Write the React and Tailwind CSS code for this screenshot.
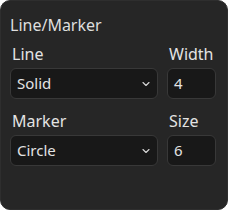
import { ChevronDown } from "lucide-react";

function Field({ label, value, select, className }) {
  return (
    <div className={className + " flex flex-col"}>
      <span className="text-[16px] leading-[20px] text-[#e3e3e3] pl-[2px]">{label}</span>
      <div className="mt-[4px] h-[31px] flex items-center justify-between rounded-[6px] border border-[#383838] bg-[#181818] pl-[6px] pr-[5px]">
        <span className="text-[15px] text-[#e3e3e3]">{value}</span>
        {select && <ChevronDown size={12} strokeWidth={2.2} className="text-[#d8d8d8]" />}
      </div>
    </div>
  );
}

export default function App() {
  return (
    <div
      className="w-[228px] h-[210px] bg-[#262626] rounded-[10px] border border-[#2e2e2e] px-[9px] pt-[14px]"
      style={{ fontFamily: "'Noto Sans', sans-serif" }}
    >
      <h2 className="text-[16px] leading-[20px] text-[#dedede]">Line/Marker</h2>
      <div className="mt-[9px] flex gap-[9px]">
        <Field label="Line" value="Solid" select className="w-[148px]" />
        <Field label="Width" value="4" className="w-[49px]" />
      </div>
      <div className="mt-[12px] flex gap-[9px]">
        <Field label="Marker" value="Circle" select className="w-[148px]" />
        <Field label="Size" value="6" className="w-[49px]" />
      </div>
    </div>
  );
}
